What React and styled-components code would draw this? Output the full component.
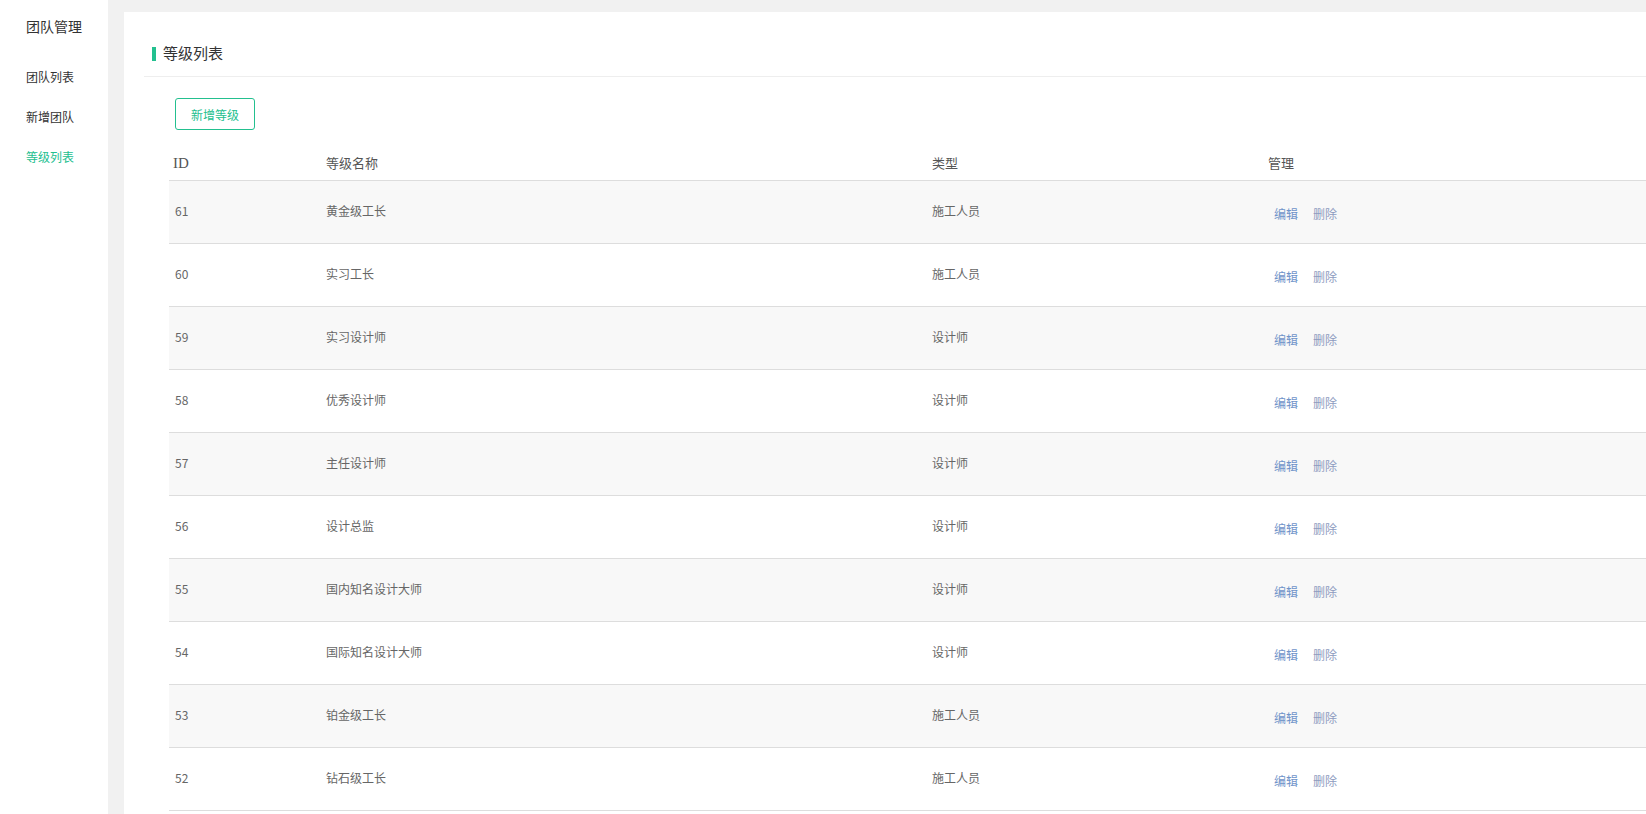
import React from "react";
import styled, { createGlobalStyle } from "styled-components";

const GlobalStyle = createGlobalStyle`
  html, body {
    margin: 0;
    padding: 0;
    background: #f1f1f1;
    overflow: hidden;
  }
  body {
    font-family: "Noto Sans CJK SC", "Noto Sans", sans-serif;
  }
`;

const Layout = styled.div`
  display: flex;
  width: 1720px;
  min-height: 814px;
`;

const Sidebar = styled.aside`
  width: 108px;
  flex-shrink: 0;
  background: #fff;
  padding: 16px 0 0 26px;
  box-sizing: border-box;
`;

const SideTitle = styled.div`
  font-size: 14px;
  line-height: 20px;
  color: #333;
  margin-bottom: 21px;
`;

const NavItem = styled.div`
  font-size: 12px;
  line-height: 40px;
  color: ${(p) => (p.active ? "#23c08f" : "#333")};
`;

const Main = styled.main`
  flex: 1;
  padding: 12px 0 0 16px;
`;

const Card = styled.section`
  background: #fff;
  min-height: 802px;
`;

const Heading = styled.div`
  margin: 0 0 0 20px;
  padding: 29px 0 11px 19px;
  font-size: 15px;
  line-height: 24px;
  color: #333;
  border-bottom: 1px solid #eee;
  position: relative;

  &::before {
    content: "";
    position: absolute;
    left: 8px;
    top: 35px;
    width: 4px;
    height: 14px;
    background: #23c08f;
  }
`;

const Body = styled.div`
  padding: 21px 0 0 45px;
`;

const AddButton = styled.button`
  margin-left: 6px;
  width: 80px;
  height: 32px;
  border: 1px solid #23c08f;
  border-radius: 3px;
  background: #fff;
  color: #23c08f;
  font-family: inherit;
  font-size: 12px;
  cursor: pointer;
`;

const Table = styled.table`
  margin-top: 16px;
  border-collapse: collapse;
  table-layout: fixed;
  width: 1600px;
`;

const Th = styled.th`
  box-sizing: border-box;
  width: ${(p) => p.w || "auto"};
  text-align: left;
  font-weight: normal;
  font-family: ${(p) =>
    p.serif
      ? '"Liberation Serif", "Noto Sans CJK SC", serif'
      : '"Noto Sans CJK SC", sans-serif'};
  font-size: ${(p) => (p.serif ? "15px" : "13px")};
  color: #555;
  padding: 7px 6px 7px ${(p) => (p.serif ? "4px" : "6px")};
  line-height: 20px;
  border-bottom: 1px solid #ddd;
`;

const Row = styled.tr`
  background: ${(p) => (p.odd ? "#f8f8f8" : "#fff")};
  border-bottom: 1px solid #ddd;
`;

const Td = styled.td`
  box-sizing: border-box;
  height: 63px;
  padding: 0 6px 3px;
  font-size: 12px;
  color: #666;
  vertical-align: middle;
`;

const ActionLink = styled.a`
  display: inline-block;
  padding: 5px 6px 0;
  margin-right: 3px;
  font-size: 12px;
  color: ${(p) => (p.muted ? "#8e9bc0" : "#6f93c9")};
  text-decoration: none;
  cursor: pointer;
`;

const levels = [
  { id: 61, name: "黄金级工长", type: "施工人员" },
  { id: 60, name: "实习工长", type: "施工人员" },
  { id: 59, name: "实习设计师", type: "设计师" },
  { id: 58, name: "优秀设计师", type: "设计师" },
  { id: 57, name: "主任设计师", type: "设计师" },
  { id: 56, name: "设计总监", type: "设计师" },
  { id: 55, name: "国内知名设计大师", type: "设计师" },
  { id: 54, name: "国际知名设计大师", type: "设计师" },
  { id: 53, name: "铂金级工长", type: "施工人员" },
  { id: 52, name: "钻石级工长", type: "施工人员" },
];

export default function App() {
  return (
    <>
      <GlobalStyle />
      <Layout>
        <Sidebar>
          <SideTitle>团队管理</SideTitle>
          <NavItem>团队列表</NavItem>
          <NavItem>新增团队</NavItem>
          <NavItem active>等级列表</NavItem>
        </Sidebar>
        <Main>
          <Card>
            <Heading>等级列表</Heading>
            <Body>
              <AddButton>新增等级</AddButton>
              <Table>
                <thead>
                  <tr>
                    <Th w="151px" serif>ID</Th>
                    <Th w="606px">等级名称</Th>
                    <Th w="336px">类型</Th>
                    <Th>管理</Th>
                  </tr>
                </thead>
                <tbody>
                  {levels.map((lv, index) => (
                    <Row key={lv.id} odd={index % 2 === 0}>
                      <Td>{lv.id}</Td>
                      <Td>{lv.name}</Td>
                      <Td>{lv.type}</Td>
                      <Td>
                        <ActionLink>编辑</ActionLink>
                        <ActionLink muted>删除</ActionLink>
                      </Td>
                    </Row>
                  ))}
                </tbody>
              </Table>
            </Body>
          </Card>
        </Main>
      </Layout>
    </>
  );
}
